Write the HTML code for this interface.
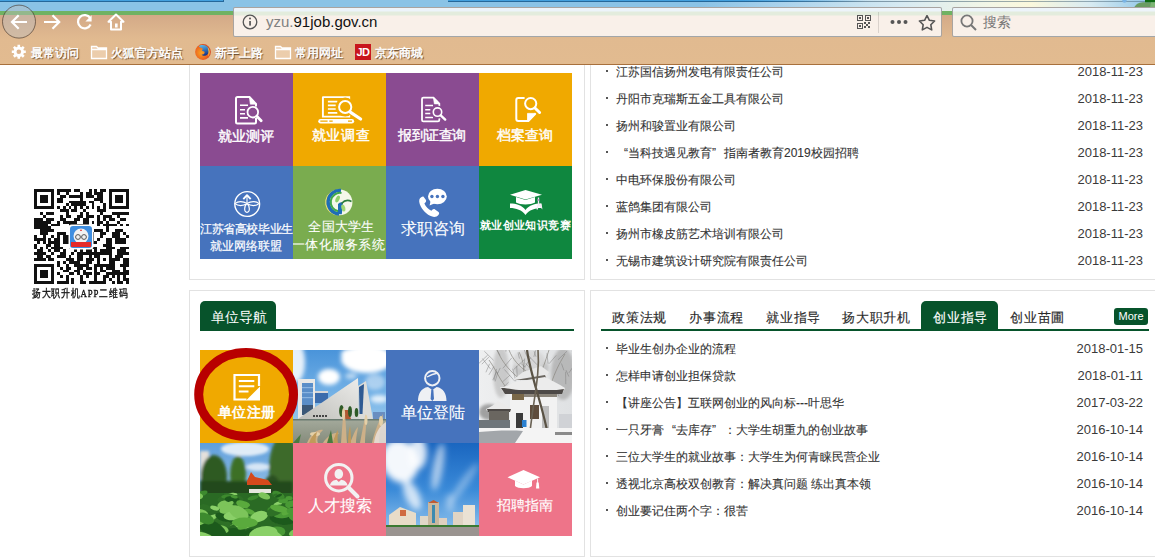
<!DOCTYPE html>
<html><head><meta charset="utf-8">
<style>
*{box-sizing:border-box}
html,body{margin:0;padding:0}
body{width:1155px;height:559px;overflow:hidden;position:relative;background:#fff;font-family:"Liberation Sans",sans-serif;color:#333}
.a{position:absolute}
/* chrome */
#sky{left:0;top:0;width:1155px;height:15px;background:linear-gradient(90deg,#8ac3e6 0,#8ac3e6 700px,#a9d2ec 780px,#d6eaf2 900px,#f3f6e6 990px,#fbf8dc 1030px,#d8ebf2 1090px,#8ac3e6 1155px)}
#green{left:0;top:11px;width:1155px;height:4px;background:#6fb263}
#tan{left:0;top:15px;width:1155px;height:50px;background:linear-gradient(180deg,#d3a987 0,#dab28c 12px,#e1ba90 24px,#e2bb90 100%);border-bottom:1px solid #a8703c}
.bm{font-size:12px;color:#fff;text-shadow:0.5px 1px 1px rgba(40,20,0,.9);top:46px;line-height:14px;white-space:nowrap;font-weight:normal;-webkit-text-stroke:0.45px #fff}
#url{left:233px;top:7px;width:709px;height:30px;border:1px solid rgba(70,70,70,.45);border-radius:2px;background:linear-gradient(180deg,#edf4fa 0,#edf4fa 3px,#e3ecdd 4px,#e3ecdd 7px,#f9f0e9 8px,#f9f0e9 100%)}
#search{left:952px;top:7px;width:220px;height:30px;border:1px solid rgba(70,70,70,.45);border-radius:2px;background:linear-gradient(180deg,#edf4fa 0,#edf4fa 3px,#e3ecdd 4px,#e3ecdd 7px,#f9f0e9 8px,#f9f0e9 100%)}
</style></head>
<body>

<!-- PAGE -->
<div id="page" class="a" style="left:0;top:0;width:1155px;height:559px">
<!-- QR -->
<svg class="a" style="left:34px;top:189px" width="95" height="95" viewBox="0 0 33 33" shape-rendering="crispEdges"><path d="M0 0h7v1h-7zM8 0h5v1h-5zM14 0h2v1h-2zM19 0h1v1h-1zM21 0h1v1h-1zM23 0h2v1h-2zM26 0h7v1h-7zM0 1h1v1h-1zM6 1h1v1h-1zM8 1h1v1h-1zM11 1h1v1h-1zM16 1h1v1h-1zM18 1h2v1h-2zM21 1h3v1h-3zM26 1h1v1h-1zM32 1h1v1h-1zM0 2h1v1h-1zM2 2h3v1h-3zM6 2h1v1h-1zM9 2h2v1h-2zM12 2h5v1h-5zM18 2h3v1h-3zM22 2h2v1h-2zM26 2h1v1h-1zM28 2h3v1h-3zM32 2h1v1h-1zM0 3h1v1h-1zM2 3h3v1h-3zM6 3h1v1h-1zM8 3h2v1h-2zM16 3h1v1h-1zM21 3h3v1h-3zM26 3h1v1h-1zM28 3h3v1h-3zM32 3h1v1h-1zM0 4h1v1h-1zM2 4h3v1h-3zM6 4h1v1h-1zM8 4h2v1h-2zM12 4h6v1h-6zM19 4h2v1h-2zM23 4h1v1h-1zM26 4h1v1h-1zM28 4h3v1h-3zM32 4h1v1h-1zM0 5h1v1h-1zM6 5h1v1h-1zM11 5h1v1h-1zM13 5h5v1h-5zM20 5h1v1h-1zM24 5h1v1h-1zM26 5h1v1h-1zM32 5h1v1h-1zM0 6h7v1h-7zM8 6h1v1h-1zM10 6h1v1h-1zM12 6h1v1h-1zM14 6h1v1h-1zM16 6h1v1h-1zM18 6h1v1h-1zM20 6h1v1h-1zM22 6h1v1h-1zM24 6h1v1h-1zM26 6h7v1h-7zM9 7h3v1h-3zM13 7h2v1h-2zM17 7h1v1h-1zM22 7h3v1h-3zM2 8h1v1h-1zM4 8h3v1h-3zM11 8h1v1h-1zM16 8h1v1h-1zM18 8h1v1h-1zM23 8h1v1h-1zM27 8h6v1h-6zM3 9h1v1h-1zM9 9h1v1h-1zM11 9h2v1h-2zM15 9h2v1h-2zM18 9h3v1h-3zM22 9h1v1h-1zM24 9h3v1h-3zM29 9h1v1h-1zM0 10h3v1h-3zM4 10h3v1h-3zM9 10h2v1h-2zM14 10h2v1h-2zM17 10h2v1h-2zM22 10h1v1h-1zM24 10h1v1h-1zM26 10h2v1h-2zM30 10h2v1h-2zM0 11h6v1h-6zM8 11h1v1h-1zM10 11h5v1h-5zM17 11h2v1h-2zM20 11h1v1h-1zM22 11h2v1h-2zM25 11h1v1h-1zM29 11h1v1h-1zM0 12h5v1h-5zM6 12h3v1h-3zM12 12h7v1h-7zM22 12h1v1h-1zM24 12h5v1h-5zM30 12h1v1h-1zM32 12h1v1h-1zM0 13h6v1h-6zM13 13h2v1h-2zM16 13h1v1h-1zM19 13h1v1h-1zM25 13h1v1h-1zM2 14h5v1h-5zM12 14h2v1h-2zM19 14h1v1h-1zM21 14h3v1h-3zM25 14h1v1h-1zM28 14h3v1h-3zM2 15h3v1h-3zM8 15h3v1h-3zM14 15h1v1h-1zM16 15h3v1h-3zM20 15h1v1h-1zM23 15h2v1h-2zM27 15h3v1h-3zM31 15h1v1h-1zM0 16h1v1h-1zM3 16h1v1h-1zM6 16h1v1h-1zM8 16h1v1h-1zM10 16h9v1h-9zM20 16h1v1h-1zM23 16h1v1h-1zM27 16h3v1h-3zM32 16h1v1h-1zM0 17h4v1h-4zM5 17h1v1h-1zM7 17h2v1h-2zM10 17h2v1h-2zM20 17h1v1h-1zM22 17h1v1h-1zM25 17h2v1h-2zM28 17h4v1h-4zM1 18h1v1h-1zM3 18h1v1h-1zM5 18h4v1h-4zM10 18h2v1h-2zM14 18h8v1h-8zM25 18h2v1h-2zM28 18h4v1h-4zM0 19h1v1h-1zM4 19h2v1h-2zM7 19h2v1h-2zM12 19h2v1h-2zM16 19h1v1h-1zM18 19h2v1h-2zM24 19h3v1h-3zM0 20h1v1h-1zM2 20h1v1h-1zM4 20h1v1h-1zM6 20h4v1h-4zM12 20h2v1h-2zM16 20h2v1h-2zM19 20h3v1h-3zM25 20h3v1h-3zM30 20h3v1h-3zM1 21h2v1h-2zM5 21h1v1h-1zM7 21h2v1h-2zM10 21h1v1h-1zM14 21h1v1h-1zM16 21h1v1h-1zM18 21h2v1h-2zM21 21h1v1h-1zM23 21h4v1h-4zM29 21h3v1h-3zM0 22h4v1h-4zM6 22h1v1h-1zM9 22h2v1h-2zM13 22h1v1h-1zM15 22h12v1h-12zM29 22h4v1h-4zM1 23h2v1h-2zM4 23h2v1h-2zM8 23h3v1h-3zM12 23h1v1h-1zM15 23h2v1h-2zM19 23h1v1h-1zM21 23h2v1h-2zM26 23h1v1h-1zM28 23h3v1h-3zM0 24h4v1h-4zM5 24h2v1h-2zM11 24h3v1h-3zM15 24h2v1h-2zM18 24h3v1h-3zM22 24h1v1h-1zM24 24h1v1h-1zM26 24h4v1h-4zM31 24h2v1h-2zM8 25h1v1h-1zM10 25h1v1h-1zM12 25h4v1h-4zM18 25h2v1h-2zM22 25h1v1h-1zM26 25h2v1h-2zM31 25h2v1h-2zM0 26h7v1h-7zM8 26h1v1h-1zM11 26h1v1h-1zM14 26h5v1h-5zM21 26h7v1h-7zM30 26h3v1h-3zM0 27h1v1h-1zM6 27h1v1h-1zM9 27h1v1h-1zM11 27h2v1h-2zM15 27h2v1h-2zM18 27h2v1h-2zM21 27h1v1h-1zM23 27h1v1h-1zM25 27h3v1h-3zM31 27h1v1h-1zM0 28h1v1h-1zM2 28h3v1h-3zM6 28h1v1h-1zM10 28h2v1h-2zM14 28h2v1h-2zM17 28h1v1h-1zM21 28h1v1h-1zM23 28h2v1h-2zM27 28h3v1h-3zM31 28h2v1h-2zM0 29h1v1h-1zM2 29h3v1h-3zM6 29h1v1h-1zM8 29h1v1h-1zM12 29h2v1h-2zM15 29h1v1h-1zM17 29h3v1h-3zM21 29h2v1h-2zM25 29h8v1h-8zM0 30h1v1h-1zM2 30h3v1h-3zM6 30h1v1h-1zM9 30h1v1h-1zM11 30h1v1h-1zM16 30h1v1h-1zM18 30h1v1h-1zM21 30h1v1h-1zM24 30h2v1h-2zM27 30h1v1h-1zM29 30h1v1h-1zM31 30h1v1h-1zM0 31h1v1h-1zM6 31h1v1h-1zM11 31h1v1h-1zM13 31h1v1h-1zM16 31h1v1h-1zM21 31h1v1h-1zM24 31h1v1h-1zM26 31h1v1h-1zM29 31h1v1h-1zM31 31h2v1h-2zM0 32h7v1h-7zM8 32h4v1h-4zM13 32h1v1h-1zM16 32h2v1h-2zM19 32h6v1h-6zM27 32h1v1h-1zM29 32h2v1h-2zM32 32h1v1h-1z" fill="#111"/></svg>
<svg class="a" style="left:68px;top:224px" width="26" height="26" viewBox="0 0 26 26">
 <rect x="0.5" y="0.5" width="25" height="25" rx="3" fill="#fff"/>
 <rect x="2" y="2" width="22" height="22" rx="3" fill="#3f8ee0"/>
 <circle cx="13" cy="12" r="7.5" fill="#f2f2f2"/>
 <circle cx="10" cy="13" r="2.4" fill="none" stroke="#555" stroke-width="1"/><circle cx="16" cy="13" r="2.4" fill="none" stroke="#555" stroke-width="1"/>
 <rect x="3" y="18" width="20" height="5" fill="#e52a2a"/>
 <path d="M13 5L14 7H12Z" fill="#e52a2a"/>
</svg>
<div class="a" style="left:32px;top:286px;font-family:'Liberation Serif',serif;font-size:11px;line-height:14px;color:#111;white-space:nowrap;font-weight:normal;-webkit-text-stroke:0.35px #111;letter-spacing:1.1px;transform-origin:0 0;transform:scaleX(0.8)">扬大职升机APP二维码</div>

<!-- panel 1 -->
<div class="a" style="left:189px;top:20px;width:396px;height:260px;border:1px solid #e2e2e2"></div>
<!-- panel 2 -->
<div class="a" style="left:590px;top:20px;width:600px;height:260px;border:1px solid #e2e2e2"></div>
<!-- panel 3 -->
<div class="a" style="left:189px;top:290px;width:396px;height:267px;border:1px solid #e2e2e2"></div>
<!-- panel 4 -->
<div class="a" style="left:590px;top:290px;width:600px;height:267px;border:1px solid #e2e2e2"></div>


<style>
.t{position:absolute;width:93px;height:93px;overflow:hidden}
.t svg{position:absolute;left:0;top:0}
.tt{position:absolute;left:-11px;width:113px;text-align:center;color:#fff;white-space:nowrap;font-size:14px;line-height:16px;font-weight:normal;-webkit-text-stroke:0.4px #fff;margin-top:-1px}
</style>
<!-- row1 -->
<div class="t" style="left:200px;top:73px;background:#8a4b91">
 <svg width="93" height="93" viewBox="0 0 93 93" fill="none" stroke="#fff">
  <path d="M56 33.5V31L49.5 24H37.5Q36 24 36 25.5V49Q36 50.5 37.5 50.5H54.5Q56 50.5 56 49V45" stroke-width="2"/>
  <path d="M49.3 23.8L56.2 31.2H50.3Z" fill="#fff" stroke-width="0.6"/>
  <path d="M40 32.3H48M40 36.7H45M40 40.8H45M40 44.9H48" stroke-width="1.6"/>
  <circle cx="52.8" cy="39.2" r="5.3" stroke-width="1.8"/>
  <path d="M56.8 43.2L61.2 47.8" stroke-width="2.8" stroke-linecap="round"/>
 </svg>
 <div class="tt" style="top:56px">就业测评</div>
</div>
<div class="t" style="left:293px;top:73px;background:#f0a900">
 <svg width="93" height="93" viewBox="0 0 93 93" fill="none" stroke="#fff">
  <path d="M56.2 30V24.1H30Q29.9 24.1 29.9 24.5V43.6H56.2V40" stroke-width="1.9"/>
  <path d="M27.6 45.9H58.8A2.35 2.35 0 0 1 58.8 50.6H27.6A2.35 2.35 0 0 1 27.6 45.9Z" fill="#fff" stroke="none"/>
  <path d="M27.3 48.2H34.6M36.3 48.2H39.7M55 48.2H59" stroke="#f0a900" stroke-width="1.2"/>
  <path d="M34.9 28.7H44.4M34.9 32.3H42.7M34.9 36H42.7M34.9 39.8H44.4" stroke-width="1.7"/>
  <circle cx="52.2" cy="34" r="7.2" stroke="#f0a900" stroke-width="4.5"/>
  <circle cx="52.2" cy="34" r="6.1" stroke-width="2"/>
  <path d="M57.6 39.3L67.6 46" stroke-width="3.2" stroke-linecap="round"/>
 </svg>
 <div class="tt" style="top:55px;letter-spacing:0.6px;margin-left:2.5px">就业调查</div>
</div>
<div class="t" style="left:386px;top:73px;background:#8a4b91">
 <svg width="93" height="93" viewBox="0 0 93 93" fill="none" stroke="#fff">
  <path d="M53.3 34V30.5L47.5 24.7H37.4Q36 24.7 36 26.1V47Q36 48.4 37.4 48.4H51.9Q53.3 48.4 53.3 47V44.5" stroke-width="1.8"/>
  <path d="M47.3 24.5L53.5 31H48.3Z" fill="#fff" stroke-width="0.5"/>
  <path d="M39.2 32.6H47M39.2 36.7H44.3M39.2 40.5H44.3M39.2 44.6H47" stroke-width="1.5"/>
  <circle cx="51.5" cy="39.1" r="5.2" stroke="#8a4b91" stroke-width="3"/>
  <circle cx="51.5" cy="39.1" r="4.2" stroke-width="1.6"/>
  <path d="M54.7 42.3L59.2 46.6" stroke-width="2.4" stroke-linecap="round"/>
 </svg>
 <div class="tt" style="top:55px;letter-spacing:-0.5px;margin-left:0.5px">报到证查询</div>
</div>
<div class="t" style="left:479px;top:73px;background:#f0a900">
 <svg width="93" height="93" viewBox="0 0 93 93" fill="none" stroke="#fff">
  <path d="M45.6 25H39.3Q37.3 25 37.3 27V46Q37.3 48 39.3 48H49.4L56.5 40.5" stroke-width="2"/>
  <path d="M48.5 48.8V40.4H56.8Z" fill="#fff" stroke-width="0.8"/>
  <circle cx="51.7" cy="30.6" r="5.6" stroke-width="2"/>
  <path d="M56.2 35.2L60.6 39.5" stroke-width="3" stroke-linecap="round"/>
 </svg>
 <div class="tt" style="top:55px">档案查询</div>
</div>
<!-- row2 -->
<div class="t" style="left:200px;top:166px;background:#4673bd">
 <svg width="93" height="93" viewBox="0 0 93 93" fill="none" stroke="#fff">
  <circle cx="47.2" cy="38" r="12.4" stroke-width="1.4"/>
  <path d="M47 30V37.6" stroke-width="1.1"/>
  <path d="M43.3 33.2L47 29.2L50.7 33.2" stroke-width="1.9" stroke-linejoin="round"/>
  <path d="M47 37.6C43 35 38 35 35 37.6C38 40.2 43 40.2 47 37.6C51 35 56 35 59 37.6C56 40.2 51 40.2 47 37.6ZM47 37.6C44 40 43.8 46.3 47 46.3C50.2 46.3 50 40 47 37.6Z" stroke-width="1.2"/>
 </svg>
 <div class="tt" style="top:57px;font-size:12px;line-height:15px;letter-spacing:-0.4px;font-weight:normal;-webkit-text-stroke:0.2px #fff;margin-left:1px">江苏省高校毕业生</div>
 <div class="tt" style="top:74px;font-size:12px;line-height:15px;font-weight:normal;-webkit-text-stroke:0.2px #fff">就业网络联盟</div>
</div>
<div class="t" style="left:293px;top:166px;background:#7aac4f">
 <svg width="93" height="93" viewBox="0 0 93 93">
  <circle cx="46.6" cy="36.4" r="12.8" fill="#f4f7ea"/>
  <path d="M41 24.8A12.3 12.3 0 0 0 45 48.7" fill="none" stroke="#f0e27a" stroke-width="1.2"/>
  <path d="M48 24.4A11.6 11.6 0 0 0 46 48.1" fill="none" stroke="#1e6db6" stroke-width="3.4"/>
  <path d="M48.5 27A9.2 9.2 0 0 0 45.5 45.3" fill="none" stroke="#40a84c" stroke-width="2"/>
  <path d="M45 38Q47.5 35.2 50 36.8L48.8 48.3H45Z" fill="#1e6db6"/>
  <ellipse cx="44.6" cy="33" rx="1.9" ry="3.6" transform="rotate(25 44.6 33)" fill="#8fd06a"/>
  <ellipse cx="50.3" cy="42" rx="1.9" ry="3.6" transform="rotate(-15 50.3 42)" fill="#9ed872"/>
  <path d="M48.5 37.5Q53 32.5 58.5 35.5" fill="none" stroke="#2d7e3c" stroke-width="1.6"/>
 </svg>
 <div class="tt" style="top:54px;font-size:13px;line-height:16px;font-weight:normal;left:-8px;-webkit-text-stroke:0.1px #fff;letter-spacing:0.3px">全国大学生</div>
 <div class="tt" style="top:72px;font-size:13px;line-height:16px;font-weight:normal;letter-spacing:0.3px;-webkit-text-stroke:0.1px #fff">一体化服务系统</div>
</div>
<div class="t" style="left:386px;top:166px;background:#4673bd">
 <svg width="93" height="93" viewBox="0 0 93 93">
  <path d="M35.2 31.2C33.2 32 32.6 34.8 33.8 38.2C35.8 43.6 40.6 48.6 46.2 50.6C48.6 51.4 51.2 50.6 52.4 49L53 48C53.4 47.2 53 46.4 52.2 45.8L49 43.4C48.2 42.8 47.2 43 46.6 43.6L45.4 44.8C42.4 43.4 39.6 40.4 38.4 37.4L39.6 36.2C40.2 35.6 40.4 34.6 39.8 33.8L37.6 30.8C37 30.2 36 30.8 35.2 31.2Z" fill="#fff"/>
  <ellipse cx="51.4" cy="30.5" rx="9.4" ry="7.7" fill="#fff"/>
  <path d="M44.6 35L43.6 39.6L48.8 37.2Z" fill="#fff"/>
  <g fill="#4673bd"><circle cx="45.9" cy="30.5" r="1.7"/><circle cx="51.4" cy="30.5" r="1.7"/><circle cx="56.9" cy="30.5" r="1.7"/></g>
 </svg>
 <div class="tt" style="top:54px;font-size:16px;line-height:19px;font-weight:normal;margin-left:1px;-webkit-text-stroke:0.1px #fff">求职咨询</div>
</div>
<div class="t" style="left:479px;top:166px;background:#0f873f">
 <svg width="93" height="93" viewBox="0 0 93 93">
  <path d="M31 28.7L46.5 24L63 28.7L46.5 33.5Z" fill="#fff"/>
  <path d="M37 31V36.5C41 39 52 39 56 36.5V31L46.5 34Z" fill="#fff"/>
  <path d="M31 37.5C37 37.5 43 39 46.5 44C50 39 56 37.5 62 37.5V42C56 42 50 44 46.5 49C43 44 37 42 31 42Z" fill="#fff"/>
  <path d="M59.5 31.5V38L58 43.5M59.5 38L62.5 41.5L62 37.5" stroke="#f4eaf6" stroke-width="1.3" fill="none"/>
  <rect x="58.6" y="33" width="1.6" height="2" fill="#c890d0"/>
 </svg>
 <div class="tt" style="top:52px;font-size:11px;line-height:16px;font-weight:bold;letter-spacing:0.4px;-webkit-text-stroke:0;margin-left:1px">就业创业知识竞赛</div>
</div>


<style>
.li{position:absolute;left:604px;width:539px;height:20px;font-size:12px;line-height:20px;color:#333;white-space:nowrap;-webkit-text-stroke:0.1px}
.li .b{position:absolute;left:2px;top:9px;width:2px;height:2px;background:#555;font-size:0}
.li .x{position:absolute;left:12px;top:1px}
.ql{display:inline-block;width:12px;text-align:right}.qr{display:inline-block;width:12px;text-align:left}
.li .d{position:absolute;right:0;top:1px;font-size:13px;-webkit-text-stroke:0;color:#3a3a3a}
</style>
<div class="li" style="top:61px"><span class="b"></span><span class="x">江苏国信扬州发电有限责任公司</span><span class="d">2018-11-23</span></div>
<div class="li" style="top:88px"><span class="b"></span><span class="x">丹阳市克瑞斯五金工具有限公司</span><span class="d">2018-11-23</span></div>
<div class="li" style="top:115px"><span class="b"></span><span class="x">扬州和骏置业有限公司</span><span class="d">2018-11-23</span></div>
<div class="li" style="top:142px"><span class="b"></span><span class="x"><span class="ql">“</span>当科技遇见教育<span class="qr">”</span>指南者教育2019校园招聘</span><span class="d">2018-11-23</span></div>
<div class="li" style="top:169px"><span class="b"></span><span class="x">中电环保股份有限公司</span><span class="d">2018-11-23</span></div>
<div class="li" style="top:196px"><span class="b"></span><span class="x">蓝鸽集团有限公司</span><span class="d">2018-11-23</span></div>
<div class="li" style="top:223px"><span class="b"></span><span class="x">扬州市橡皮筋艺术培训有限公司</span><span class="d">2018-11-23</span></div>
<div class="li" style="top:250px"><span class="b"></span><span class="x">无锡市建筑设计研究院有限责任公司</span><span class="d">2018-11-23</span></div>


<!-- panel 3 tab -->
<div class="a" style="left:200px;top:329px;width:374px;height:2px;background:#07532b"></div>
<div class="a" style="left:200px;top:301px;width:76px;height:30px;background:#07532b;border-radius:5px 5px 0 0;color:#fff;font-size:14px;line-height:18px;padding:7px 0 0 11px;white-space:nowrap">单位导航</div>

<div class="t" style="left:200px;top:350px;background:#f0a900">
 <svg width="93" height="93" viewBox="0 0 93 93" fill="none" stroke="#fff">
  <path d="M59 36V25H34.5V49.5H46.5" stroke-width="2.2"/>
  <path d="M46 50.5L60 36.5V50.5Z" fill="#fff" stroke="none"/>
  <path d="M38.8 31H54.3M38.8 36.2H54.3M38.8 41.5H48.5" stroke-width="2"/>
 </svg>
 <div class="tt" style="top:55px;font-weight:normal;-webkit-text-stroke:0.6px #fff;letter-spacing:0.5px;margin-left:1px">单位注册</div>
</div>
<div class="t" style="left:293px;top:350px">
 <svg width="93" height="93" viewBox="0 0 93 93">
  <defs>
   <linearGradient id="sk1" x1="0" y1="0" x2="0" y2="1"><stop offset="0" stop-color="#4a94da"/><stop offset="0.55" stop-color="#7ab6e8"/><stop offset="1" stop-color="#b8d8f0"/></linearGradient>
   <linearGradient id="tri1" x1="1" y1="0" x2="0" y2="1"><stop offset="0" stop-color="#ececea"/><stop offset="1" stop-color="#bdbdb8"/></linearGradient>
   <linearGradient id="wat1" x1="0" y1="0" x2="0" y2="1"><stop offset="0" stop-color="#a4aa9c"/><stop offset="1" stop-color="#868c7c"/></linearGradient>
   <filter id="bl1"><feGaussianBlur stdDeviation="2.2"/></filter>
   <filter id="bl05"><feGaussianBlur stdDeviation="0.5"/></filter>
  </defs>
  <rect width="93" height="93" fill="url(#sk1)"/>
  <g filter="url(#bl1)" fill="#fff">
   <ellipse cx="74" cy="9" rx="26" ry="14"/><ellipse cx="60" cy="4" rx="12" ry="6"/><ellipse cx="36" cy="27" rx="11" ry="8"/><ellipse cx="3" cy="12" rx="9" ry="20" opacity=".85"/>
   <ellipse cx="86" cy="49" rx="9" ry="4" opacity=".8"/><ellipse cx="82" cy="32" rx="10" ry="8" opacity=".45"/><ellipse cx="58" cy="26" rx="6" ry="3" opacity=".6"/>
  </g>
  <g filter="url(#bl05)">
  <rect x="5" y="29" width="17" height="41" fill="#e8e8e6"/>
  <rect x="9" y="33" width="11" height="22" fill="#5a8ec8"/>
  <g fill="#8ab4e0"><rect x="9" y="37" width="11" height="1.2"/><rect x="9" y="42" width="11" height="1.2"/><rect x="9" y="47" width="11" height="1.2"/></g>
  <rect x="9" y="55" width="11" height="10" fill="#3a5878"/>
  <rect x="22" y="41" width="13" height="2" fill="#d8d8d8"/>
  <rect x="22" y="43" width="13" height="10" fill="#3a6cac"/>
  <path d="M4 69.5L65 28L66 69.5Z" fill="url(#tri1)"/>
  <path d="M65 36L73 31L80 69.5H66Z" fill="#dcdcd8"/>
  <path d="M66 37L71 34L69.5 64H66.5Z" fill="#2e5a92"/>
  <rect x="80" y="62" width="12" height="7" fill="#6a8ec0"/>
  <g fill="#444"><rect x="20" y="65" width="2" height="2"/><rect x="23" y="65" width="2" height="2"/><rect x="26" y="65" width="2" height="2"/><rect x="29" y="65" width="2" height="2"/><rect x="32" y="65" width="2" height="2"/></g>
  <rect x="0" y="69" width="93" height="24" fill="url(#wat1)"/>
  <rect x="0" y="69" width="93" height="1.5" fill="#6a7a70"/>
  <path d="M50 60L55 60L58 69H51Z" fill="#b05a30"/>
  <g fill="#2e5a28"><ellipse cx="48.5" cy="61" rx="2.4" ry="6"/><ellipse cx="57" cy="61.5" rx="2" ry="5.5"/><ellipse cx="63.5" cy="62.5" rx="1.8" ry="4.5"/></g>
  </g>
  <g filter="url(#bl05)">
   <g fill="#cdb088">
    <path d="M14 93C18 84 24 79 30 80C26 84 23 88 25 93Z"/><path d="M30 93C34 87 40 82 46 83C42 86 40 90 41 93Z"/>
    <path d="M48 93C49 80 50 68 50.5 57C53 66 53 82 54 93Z"/><path d="M67 93C69 82 71 72 73 64C74 74 72 84 72 93Z"/>
    <path d="M79 93C81 84 85 72 90 64C88 76 86 84 86 93Z"/><path d="M57 93C60 86 62 80 65 77C64 84 63 88 63 93Z"/>
   </g>
   <g fill="#e4d0a8"><ellipse cx="50.5" cy="64" rx="1.6" ry="6"/><ellipse cx="73" cy="70" rx="1.5" ry="5"/><ellipse cx="88" cy="71" rx="2" ry="5"/><ellipse cx="22" cy="84" rx="5" ry="2"/></g>
   <g fill="#4a7a40"><path d="M0 93L8 84L6 93Z"/><path d="M34 93L38 80L40 93Z"/></g>
   <path d="M81 93C82 84 86 76 93 72V93Z" fill="#e8e0dc" opacity=".85"/>
   <g fill="#c09a5a"><path d="M16 93C18 88 20 84 24 82C23 86 22 90 23 93Z"/><path d="M40 93C41 88 43 83 45 80C45 85 44 89 45 93Z"/><path d="M55 93C55 86 56 80 57 76C58 82 58 88 58 93Z"/></g>
  </g>
 </svg>
</div>
<div class="t" style="left:386px;top:350px;background:#4673bd">
 <svg width="93" height="93" viewBox="0 0 93 93" fill="none">
  <circle cx="46.3" cy="28.2" r="7.2" stroke="#eef0f4" stroke-width="2"/>
  <path d="M41 27Q46 24 52 23" stroke="#eef0f4" stroke-width="1.4"/>
  <path d="M32 51C32 44 35 38 42 37L46.3 40L50.6 37C57.5 38 60.5 44 60.5 51Z" fill="#eef0f4"/>
  <path d="M45.3 39.5H47.3L48 49L46.3 51L44.6 49Z" fill="#4673bd"/>
 </svg>
 <div class="tt" style="top:54px;font-size:16px;line-height:19px;font-weight:normal;margin-left:1px;-webkit-text-stroke:0.1px #fff">单位登陆</div>
</div>
<div class="t" style="left:479px;top:350px">
 <svg width="93" height="93" viewBox="0 0 93 93">
  <defs><filter id="bl2"><feGaussianBlur stdDeviation="0.6"/></filter><filter id="bl3"><feGaussianBlur stdDeviation="1.8"/></filter>
  <linearGradient id="sn1" x1="0" y1="0" x2="1" y2="0"><stop offset="0" stop-color="#eeeff0"/><stop offset="1" stop-color="#dfe1e3"/></linearGradient></defs>
  <rect width="93" height="93" fill="url(#sn1)"/>
  <g filter="url(#bl3)" opacity=".7">
   <ellipse cx="22" cy="22" rx="8" ry="26" fill="#bcbcbc"/><ellipse cx="84" cy="24" rx="12" ry="26" fill="#a8a8a8"/><ellipse cx="10" cy="62" rx="10" ry="8" fill="#808080"/><ellipse cx="52" cy="18" rx="18" ry="12" fill="#b8b8b8"/>
   <ellipse cx="50" cy="10" rx="16" ry="10" fill="#d0d0d0"/>
  </g>
  <g filter="url(#bl2)">
  <g stroke="#8a8680" stroke-width="0.7" fill="none">
   <path d="M18 0C24 14 32 22 42 30M30 0C34 10 40 16 48 22M70 0C66 12 64 20 58 28M86 4C80 14 76 22 72 34M40 2C44 10 46 18 44 28M10 10C16 18 20 28 26 36"/>
  </g>
  <path d="M44.8 19.6L45.7 8.5M21.3 17.9L18.1 24.1M17.5 18.9L15.0 30.6M89.9 22.9L93.4 17.8M10.2 6.7L2.8 14.2M57.0 6.8L55.1 1.1M45.2 9.7L34.7 19.5M32.7 8.0L23.8 18.4M14.5 10.2L5.3 1.2M23.5 31.9L30.9 25.2M54.8 6.9L57.5 -1.8M89.8 26.5L87.0 20.1M45.9 17.0L51.7 7.6M41.9 13.4L46.4 17.4M92.8 0.7L102.0 -7.1M8.7 5.1L-0.1 13.4M39.0 2.6L40.5 8.6M37.7 15.9L38.3 27.6M21.1 5.4L16.9 -2.0M18.9 22.0L16.1 31.5M58.1 14.8L47.3 3.5M70.1 13.7L77.2 5.4M86.8 34.2L86.6 21.7M29.7 32.1L23.4 38.2M26.9 1.6L28.1 -14.1M36.9 31.2L33.7 18.7M56.9 32.3L54.9 23.4M6.9 22.3L10.6 13.8M11.6 19.1L3.4 8.5M74.8 32.0L79.7 46.2M88.1 1.1L79.0 9.8M56.3 21.3L60.3 36.7M69.1 13.6L67.9 3.3M50.6 18.0L46.7 13.2M48.8 21.5L51.3 27.0M17.6 21.4L13.8 30.1M48.9 8.5L44.0 -2.9M82.5 13.5L84.9 20.4M35.9 31.3L25.4 19.5M14.9 16.5L9.9 24.9" stroke="#777" stroke-width="0.6" fill="none" opacity=".75"/>
  <path d="M34 30L44 22L62 16L70 22L66 30Z" fill="#e8e8e8"/>
  <path d="M36 30L66 25L68 30H40Z" fill="#6a6660"/>
  <rect x="31" y="37" width="47" height="43" fill="#f2f2f2"/>
  <path d="M21 37C26 38 30 35 36 32L66 27C72 30 80 34 86 38L84 42H24Z" fill="#ececec"/>
  <path d="M22 38C30 38 34 40 40 40H70C76 40 80 40 85 39L83 44H26Z" fill="#4e4a46"/>
  <rect x="33" y="44" width="45" height="3" fill="#8a847a"/>
  <rect x="33" y="44" width="12" height="6" fill="#7a6848"/>
  <rect x="51" y="55" width="9" height="14" fill="#5e4e3c"/>
  <rect x="37" y="63" width="7" height="16" fill="#3a3a3a"/>
  <rect x="43" y="70" width="4.5" height="7" fill="#2a80d0"/>
  <rect x="63" y="56" width="7" height="24" fill="#bdbdbd"/>
  <path d="M7 59C12 57 16 54 19 51L29 56L32 61H8Z" fill="#eaeaea"/>
  <path d="M8 59H32L31 62H9Z" fill="#4e4a46"/>
  <rect x="10" y="61" width="20" height="11" fill="#6a6660"/>
  <rect x="0" y="70" width="31" height="8" fill="#6e747a"/>
  <rect x="80" y="64" width="13" height="17" fill="#d0d2d6"/>
  <path d="M48 0C52 28 64 56 70 90" stroke="#5a5244" stroke-width="2.2" fill="none"/>
  <path d="M59 0C61 24 55 46 51 82" stroke="#6a6254" stroke-width="1.6" fill="none"/>
  <rect x="0" y="78" width="93" height="15" fill="#f4f4f4"/>
  <path d="M0 82C12 81 30 80 44 81L36 93H0Z" fill="#a2a6aa"/>
  <rect x="76" y="82" width="17" height="3" fill="#8a8a8a"/>
  </g>
 </svg>
</div>
<div class="t" style="left:200px;top:443px">
 <svg width="93" height="93" viewBox="0 0 93 93">
  <defs><linearGradient id="sk3" x1="0" y1="0" x2="0" y2="1"><stop offset="0" stop-color="#5f9fdc"/><stop offset="1" stop-color="#c4dcf0"/></linearGradient>
  <filter id="bl4"><feGaussianBlur stdDeviation="1.4"/></filter><filter id="bl5"><feGaussianBlur stdDeviation="0.5"/></filter></defs>
  <rect width="93" height="93" fill="url(#sk3)"/>
  <g filter="url(#bl4)">
   <ellipse cx="45" cy="6" rx="24" ry="7" fill="#f4f8fc" opacity=".85"/><ellipse cx="58" cy="24" rx="12" ry="4" fill="#eef4fa" opacity=".8"/>
   <rect x="0" y="8" width="9" height="28" fill="#e4e0dc"/>
   <ellipse cx="14" cy="34" rx="13" ry="22" fill="#2e5a22"/>
   <ellipse cx="38" cy="32" rx="8" ry="19" fill="#3e7028"/>
   <ellipse cx="84" cy="26" rx="15" ry="34" fill="#3e6a2a"/>
   <ellipse cx="72" cy="44" rx="8" ry="12" fill="#2a5020"/>
   <rect x="0" y="38" width="93" height="16" fill="#244a1c"/>
  </g>
  <g filter="url(#bl5)">
   <path d="M47 38L51 29L55 34L68 37L72 42H47Z" fill="#d44a1c"/>
   <rect x="49" y="46" width="22" height="4" fill="#e6e6de"/>
  </g>
  <rect x="0" y="50" width="93" height="43" fill="#2a6a24"/>
  <g filter="url(#bl5)"><ellipse cx="19.5" cy="75.0" rx="7.6" ry="3.8" fill="#8ad068" transform="rotate(7 19.5 75.0)"/><ellipse cx="1.7" cy="50.6" rx="6.1" ry="2.5" fill="#3d8a2e" transform="rotate(-18 1.7 50.6)"/><ellipse cx="97.6" cy="71.6" rx="10.7" ry="5.0" fill="#8ad068" transform="rotate(25 97.6 71.6)"/><ellipse cx="10.5" cy="79.2" rx="12.6" ry="6.1" fill="#8ad068" transform="rotate(-30 10.5 79.2)"/><ellipse cx="64.2" cy="52.9" rx="6.2" ry="3.1" fill="#7cc45a" transform="rotate(19 64.2 52.9)"/><ellipse cx="-1.8" cy="89.8" rx="10.9" ry="5.7" fill="#2e7026" transform="rotate(15 -1.8 89.8)"/><ellipse cx="76.2" cy="69.6" rx="9.4" ry="4.7" fill="#3d8a2e" transform="rotate(26 76.2 69.6)"/><ellipse cx="32.6" cy="51.7" rx="4.8" ry="2.0" fill="#8ad068" transform="rotate(-3 32.6 51.7)"/><ellipse cx="75.2" cy="89.3" rx="10.2" ry="5.7" fill="#4a9a36" transform="rotate(-8 75.2 89.3)"/><ellipse cx="50.0" cy="68.7" rx="5.7" ry="2.5" fill="#5aaa3c" transform="rotate(24 50.0 68.7)"/><ellipse cx="23.8" cy="77.9" rx="10.8" ry="5.7" fill="#7cc45a" transform="rotate(4 23.8 77.9)"/><ellipse cx="88.2" cy="76.2" rx="10.6" ry="4.3" fill="#1f5a1e" transform="rotate(6 88.2 76.2)"/><ellipse cx="22.5" cy="55.7" rx="5.4" ry="2.7" fill="#2e7026" transform="rotate(-25 22.5 55.7)"/><ellipse cx="30.4" cy="53.1" rx="6.9" ry="2.4" fill="#2e7026" transform="rotate(19 30.4 53.1)"/><ellipse cx="37.8" cy="55.5" rx="5.9" ry="3.2" fill="#2e7026" transform="rotate(15 37.8 55.5)"/><ellipse cx="55.4" cy="75.3" rx="12.2" ry="5.1" fill="#3d8a2e" transform="rotate(-28 55.4 75.3)"/><ellipse cx="26.9" cy="53.5" rx="5.6" ry="2.0" fill="#3d8a2e" transform="rotate(-4 26.9 53.5)"/><ellipse cx="25.0" cy="62.1" rx="7.7" ry="4.6" fill="#7cc45a" transform="rotate(-10 25.0 62.1)"/><ellipse cx="32.1" cy="56.4" rx="7.4" ry="3.3" fill="#1f5a1e" transform="rotate(3 32.1 56.4)"/><ellipse cx="34.8" cy="89.9" rx="13.0" ry="4.9" fill="#1f5a1e" transform="rotate(2 34.8 89.9)"/><ellipse cx="22.9" cy="79.2" rx="11.2" ry="6.6" fill="#2e7026" transform="rotate(-14 22.9 79.2)"/><ellipse cx="48.7" cy="75.2" rx="4.7" ry="2.1" fill="#4a9a36" transform="rotate(-10 48.7 75.2)"/><ellipse cx="-2.9" cy="78.3" rx="10.4" ry="3.8" fill="#8ad068" transform="rotate(-9 -2.9 78.3)"/><ellipse cx="43.0" cy="81.2" rx="8.4" ry="4.4" fill="#8ad068" transform="rotate(1 43.0 81.2)"/><ellipse cx="-2.7" cy="52.8" rx="5.8" ry="3.4" fill="#7cc45a" transform="rotate(10 -2.7 52.8)"/><ellipse cx="42.0" cy="77.3" rx="7.5" ry="3.3" fill="#7cc45a" transform="rotate(18 42.0 77.3)"/><ellipse cx="33.0" cy="77.4" rx="7.4" ry="3.3" fill="#1f5a1e" transform="rotate(22 33.0 77.4)"/><ellipse cx="-2.2" cy="76.2" rx="10.8" ry="4.6" fill="#3d8a2e" transform="rotate(11 -2.2 76.2)"/><ellipse cx="77.8" cy="61.0" rx="4.5" ry="2.1" fill="#8ad068" transform="rotate(-24 77.8 61.0)"/><ellipse cx="5.5" cy="64.8" rx="5.9" ry="3.3" fill="#2e7026" transform="rotate(21 5.5 64.8)"/><ellipse cx="83.1" cy="57.8" rx="4.9" ry="2.5" fill="#4a9a36" transform="rotate(-2 83.1 57.8)"/><ellipse cx="22.9" cy="86.2" rx="6.0" ry="3.5" fill="#7cc45a" transform="rotate(21 22.9 86.2)"/><ellipse cx="81.1" cy="76.4" rx="11.9" ry="5.2" fill="#1f5a1e" transform="rotate(11 81.1 76.4)"/><ellipse cx="3.8" cy="78.5" rx="10.0" ry="4.6" fill="#4a9a36" transform="rotate(20 3.8 78.5)"/><ellipse cx="82.5" cy="71.4" rx="9.1" ry="3.8" fill="#4a9a36" transform="rotate(-4 82.5 71.4)"/><ellipse cx="-1.3" cy="69.0" rx="5.5" ry="2.6" fill="#1f5a1e" transform="rotate(26 -1.3 69.0)"/><ellipse cx="59.1" cy="73.5" rx="8.9" ry="5.3" fill="#8ad068" transform="rotate(-16 59.1 73.5)"/><ellipse cx="-1.7" cy="71.0" rx="9.9" ry="5.3" fill="#7cc45a" transform="rotate(4 -1.7 71.0)"/><ellipse cx="30.1" cy="60.5" rx="3.7" ry="1.9" fill="#7cc45a" transform="rotate(-23 30.1 60.5)"/><ellipse cx="78.4" cy="52.1" rx="6.7" ry="3.5" fill="#3d8a2e" transform="rotate(27 78.4 52.1)"/><ellipse cx="86.0" cy="69.8" rx="4.5" ry="2.1" fill="#5aaa3c" transform="rotate(-20 86.0 69.8)"/><ellipse cx="46.8" cy="61.0" rx="3.5" ry="1.7" fill="#5aaa3c" transform="rotate(30 46.8 61.0)"/><ellipse cx="89.0" cy="55.2" rx="3.5" ry="2.1" fill="#4a9a36" transform="rotate(0 89.0 55.2)"/><ellipse cx="78.6" cy="52.8" rx="3.7" ry="1.4" fill="#1f5a1e" transform="rotate(-23 78.6 52.8)"/><ellipse cx="12.6" cy="86.4" rx="14.7" ry="8.1" fill="#1f5a1e" transform="rotate(28 12.6 86.4)"/><ellipse cx="-4.2" cy="78.9" rx="12.5" ry="4.5" fill="#7cc45a" transform="rotate(-15 -4.2 78.9)"/><ellipse cx="22.7" cy="74.3" rx="7.9" ry="3.7" fill="#1f5a1e" transform="rotate(22 22.7 74.3)"/><ellipse cx="-4.8" cy="52.5" rx="3.2" ry="1.2" fill="#5aaa3c" transform="rotate(0 -4.8 52.5)"/><ellipse cx="95.4" cy="89.3" rx="6.8" ry="3.2" fill="#7cc45a" transform="rotate(-20 95.4 89.3)"/><ellipse cx="27.4" cy="66.2" rx="8.2" ry="4.1" fill="#7cc45a" transform="rotate(-14 27.4 66.2)"/><ellipse cx="14.7" cy="65.1" rx="4.6" ry="2.2" fill="#8ad068" transform="rotate(16 14.7 65.1)"/><ellipse cx="34.2" cy="53.7" rx="3.6" ry="1.6" fill="#4a9a36" transform="rotate(11 34.2 53.7)"/><ellipse cx="75.6" cy="67.5" rx="9.5" ry="4.8" fill="#2e7026" transform="rotate(-27 75.6 67.5)"/><ellipse cx="33.4" cy="72.8" rx="9.9" ry="4.5" fill="#8ad068" transform="rotate(-4 33.4 72.8)"/><ellipse cx="42.5" cy="61.3" rx="6.6" ry="3.5" fill="#5aaa3c" transform="rotate(21 42.5 61.3)"/><ellipse cx="38.8" cy="69.6" rx="10.5" ry="6.1" fill="#7cc45a" transform="rotate(27 38.8 69.6)"/><ellipse cx="52.6" cy="90.0" rx="7.2" ry="3.8" fill="#1f5a1e" transform="rotate(16 52.6 90.0)"/><ellipse cx="63.2" cy="90.8" rx="14.4" ry="7.4" fill="#8ad068" transform="rotate(-10 63.2 90.8)"/><ellipse cx="53.1" cy="54.7" rx="5.7" ry="2.0" fill="#3d8a2e" transform="rotate(-15 53.1 54.7)"/><ellipse cx="74.8" cy="52.0" rx="3.0" ry="1.1" fill="#2e7026" transform="rotate(-19 74.8 52.0)"/><ellipse cx="79.4" cy="65.7" rx="9.5" ry="3.4" fill="#5aaa3c" transform="rotate(13 79.4 65.7)"/><ellipse cx="44.6" cy="82.0" rx="7.9" ry="3.3" fill="#5aaa3c" transform="rotate(-28 44.6 82.0)"/><ellipse cx="97.6" cy="75.9" rx="9.1" ry="3.7" fill="#4a9a36" transform="rotate(17 97.6 75.9)"/><ellipse cx="5.3" cy="75.5" rx="9.2" ry="5.2" fill="#3d8a2e" transform="rotate(22 5.3 75.5)"/><ellipse cx="3.0" cy="95.9" rx="13.8" ry="6.4" fill="#8ad068" transform="rotate(18 3.0 95.9)"/><ellipse cx="92.1" cy="61.6" rx="7.0" ry="4.1" fill="#4a9a36" transform="rotate(-4 92.1 61.6)"/><ellipse cx="94.5" cy="67.3" rx="5.6" ry="3.2" fill="#1f5a1e" transform="rotate(17 94.5 67.3)"/><ellipse cx="94.6" cy="69.1" rx="8.2" ry="4.0" fill="#4a9a36" transform="rotate(13 94.6 69.1)"/><ellipse cx="44.8" cy="79.6" rx="12.9" ry="5.0" fill="#5aaa3c" transform="rotate(1 44.8 79.6)"/><ellipse cx="72.1" cy="92.2" rx="11.7" ry="5.4" fill="#8ad068" transform="rotate(24 72.1 92.2)"/></g>
 </svg>
</div>
<div class="t" style="left:293px;top:443px;background:#ee7489">
 <svg width="93" height="93" viewBox="0 0 93 93" fill="none">
  <circle cx="45.8" cy="34.7" r="13.2" stroke="#f2f2f2" stroke-width="3"/>
  <path d="M55.5 44.5L64.5 53.5" stroke="#f2f2f2" stroke-width="4" stroke-linecap="round"/>
  <ellipse cx="45.8" cy="31" rx="4.3" ry="5" fill="#f2f2f2"/>
  <path d="M37 42.5C37.5 38.5 41 37 43.5 36.8L45.8 39L48.1 36.8C50.6 37 54 38.5 54.5 42.5Z" fill="#f2f2f2"/>
 </svg>
 <div class="tt" style="top:54px;font-size:16px;line-height:19px;font-weight:normal;margin-left:1px;-webkit-text-stroke:0.1px #fff">人才搜索</div>
</div>
<div class="t" style="left:386px;top:443px">
 <svg width="93" height="93" viewBox="0 0 93 93">
  <defs><linearGradient id="sk4" x1="0" y1="0" x2="0" y2="1"><stop offset="0" stop-color="#1a66c0"/><stop offset="0.5" stop-color="#3a8ad8"/><stop offset="1" stop-color="#9ccaf0"/></linearGradient>
  <filter id="bl6"><feGaussianBlur stdDeviation="3"/></filter><filter id="bl7"><feGaussianBlur stdDeviation="0.6"/></filter></defs>
  <rect width="93" height="93" fill="url(#sk4)"/>
  <g filter="url(#bl6)" fill="#fff">
   <ellipse cx="14" cy="18" rx="18" ry="22" opacity=".95" transform="rotate(-20 14 18)"/><ellipse cx="32" cy="10" rx="9" ry="16" opacity=".85"/>
   <ellipse cx="26" cy="52" rx="7" ry="16" opacity=".75" transform="rotate(-25 26 52)"/><ellipse cx="52" cy="24" rx="5" ry="24" opacity=".6" transform="rotate(10 52 24)"/>
   <ellipse cx="78" cy="40" rx="4" ry="24" opacity=".35" transform="rotate(35 78 40)"/><ellipse cx="64" cy="60" rx="4" ry="9" opacity=".4"/>
  </g>
  <g filter="url(#bl7)">
   <path d="M3 72L14 64L30 70V83H3Z" fill="#e8dcc8"/>
   <rect x="14" y="67" width="6" height="6" fill="#d06a40"/>
   <rect x="42" y="59" width="11" height="24" fill="#c8b8a0"/><rect x="46" y="62" width="3" height="18" fill="#3a8ab0"/>
   <path d="M42 60L47.5 57L53 60Z" fill="#c05a30"/>
   <rect x="34" y="73" width="8" height="10" fill="#e0d8c8"/><rect x="53" y="75" width="8" height="8" fill="#e0d0c0"/>
   <rect x="67" y="69" width="10" height="14" fill="#e0d4c4"/><rect x="77" y="62" width="12" height="21" fill="#eae2d4"/>
   <rect x="0" y="82" width="93" height="3" fill="#3a7a30"/>
   <rect x="0" y="84" width="93" height="9" fill="#9a9490"/>
  </g>
 </svg>
</div>
<div class="t" style="left:479px;top:443px;background:#ee7489">
 <svg width="93" height="93" viewBox="0 0 93 93">
  <path d="M28.5 34.3L44.5 27L61 34.3L44.5 41.5Z" fill="#fff"/>
  <path d="M36 37.5V43C39 46 50 46 53 43V37.5L44.5 41.5Z" fill="#fff"/>
  <path d="M58.6 35.5V40" stroke="#fff" stroke-width="0.9"/>
  <path d="M57.5 39.5H59.7L60.3 45.5H57Z" fill="#fff"/>
 </svg>
 <div class="tt" style="top:55px;-webkit-text-stroke:0.15px #fff">招聘指南</div>
</div>
<!-- red circle -->
<svg class="a" style="left:186px;top:340px" width="120" height="110" viewBox="0 0 120 110">
 <ellipse cx="60.1" cy="54.5" rx="47.4" ry="41.9" fill="none" stroke="#b80000" stroke-width="9"/>
</svg>


<!-- tabs panel 4 -->
<div class="a" style="left:601px;top:329px;width:548px;height:2px;background:#07532b"></div>
<div class="a" style="left:921px;top:301px;width:77px;height:30px;background:#07532b;border-radius:5px 5px 0 0"></div>
<div class="a tab" style="left:612px">政策法规</div>
<div class="a tab" style="left:689px">办事流程</div>
<div class="a tab" style="left:766px">就业指导</div>
<div class="a tab" style="left:842px">扬大职升机</div>
<div class="a tab" style="left:933px;color:#fff">创业指导</div>
<div class="a tab" style="left:1010px">创业苗圃</div>
<div class="a" style="left:1114px;top:308px;width:34px;height:17px;background:#07532b;border-radius:3px;color:#fff;font-size:11px;line-height:17px;text-align:center">More</div>
<style>.tab{top:309px;font-size:13px;letter-spacing:0.8px;line-height:18px;color:#2a2a2a;white-space:nowrap;-webkit-text-stroke:0.15px}</style>
<div class="li" style="top:338px"><span class="b"></span><span class="x">毕业生创办企业的流程</span><span class="d">2018-01-15</span></div>
<div class="li" style="top:365px"><span class="b"></span><span class="x">怎样申请创业担保贷款</span><span class="d">2018-01-11</span></div>
<div class="li" style="top:392px"><span class="b"></span><span class="x">【讲座公告】互联网创业的风向标---叶思华</span><span class="d">2017-03-22</span></div>
<div class="li" style="top:419px"><span class="b"></span><span class="x">一只牙膏<span class="ql">“</span>去库存<span class="qr">”</span>：大学生胡重九的创业故事</span><span class="d">2016-10-14</span></div>
<div class="li" style="top:446px"><span class="b"></span><span class="x">三位大学生的就业故事：大学生为何青睐民营企业</span><span class="d">2016-10-14</span></div>
<div class="li" style="top:473px"><span class="b"></span><span class="x">透视北京高校双创教育：解决真问题 练出真本领</span><span class="d">2016-10-14</span></div>
<div class="li" style="top:500px"><span class="b"></span><span class="x">创业要记住两个字：很苦</span><span class="d">2016-10-14</span></div>

</div>
<div id="chrome">
<div id="sky" class="a"></div>
<div class="a" style="left:0;top:0;width:224px;height:2px;background:#43a0de;border-bottom:1px solid #25689a;border-right:1px solid #25689a"></div>
<div class="a" style="left:448px;top:0;width:420px;height:2px;background:linear-gradient(90deg,#43a0de,#43a0de 70%,rgba(67,160,222,0))"></div>
<div class="a" style="left:448px;top:1px;width:697px;height:1px;background:linear-gradient(90deg,#25689a,#25689a 45%,rgba(60,90,110,.55) 60%,rgba(60,90,110,.45) 100%)"></div>
<svg class="a" style="left:1100px;top:0" width="55" height="15" viewBox="0 0 55 15"><path d="M34 7.5C36 4.5 38 2.5 43 2.3H55V7.5Z" fill="#6a9c62"/><path d="M45 0H55V2.3H45Z" fill="#0c6a10"/><path d="M51 2.3L55 2.3V7.5H50Z" fill="#8ac880" opacity=".6"/><circle cx="24.5" cy="0.5" r="2.2" fill="#7ab4e4"/></svg>
<div id="green" class="a"></div>
<div id="tan" class="a"></div>

<!-- back circle -->
<svg class="a" style="left:0;top:0" width="140" height="42" viewBox="0 0 140 42">
  <circle cx="19" cy="21.6" r="16.5" fill="rgba(190,190,190,.45)" stroke="rgba(60,45,35,.6)" stroke-width="1"/>
  <g stroke="#fff" stroke-width="2.2" fill="none" stroke-linecap="butt">
    <path d="M11.5 22H27M18.7 15.3L12 22L18.7 28.7"/>
    <path d="M44 22H59.5M52.5 15.3L59.2 22L52.5 28.7"/>
    <path d="M90.2 18.2A6.6 6.6 0 1 0 90.6 24.5"/>
  </g>
  <path d="M91.6 15.2V21.6H85.4Z" fill="#fff"/>
  <path d="M116 14.5L108.5 21.8H111V29.5H121V21.8H123.5Z" fill="none" stroke="#fff" stroke-width="2" stroke-linejoin="round"/>
  <rect x="115" y="23.5" width="2.6" height="4" fill="#fff"/>
</svg>

<div id="url" class="a"></div>
<svg class="a" style="left:240px;top:13px" width="20" height="20" viewBox="0 0 20 20">
  <circle cx="10" cy="9" r="6.8" fill="none" stroke="#555" stroke-width="1.3"/>
  <rect x="9.2" y="8" width="1.7" height="4.6" fill="#555"/><circle cx="10" cy="5.6" r="1" fill="#555"/>
</svg>
<div class="a" style="left:266px;top:13px;font-size:15px;line-height:18px;color:#111;white-space:nowrap"><span style="color:#808080">yzu.</span>91job.gov.cn</div>
<!-- qr icon -->
<svg class="a" style="left:857px;top:15px" width="14" height="14" viewBox="0 0 14 14" shape-rendering="crispEdges">
 <g fill="none" stroke="#555" stroke-width="1"><rect x="0.5" y="0.5" width="5" height="5"/><rect x="8.5" y="0.5" width="5" height="5"/><rect x="0.5" y="8.5" width="5" height="5"/></g>
 <g fill="#555"><rect x="2" y="2" width="2" height="2"/><rect x="10" y="2" width="2" height="2"/><rect x="2" y="10" width="2" height="2"/><rect x="7" y="7" width="2" height="2"/><rect x="9" y="9" width="2" height="2"/><rect x="11" y="11" width="2" height="2"/><rect x="11" y="7" width="2" height="2"/><rect x="7" y="11" width="2" height="2"/></g>
</svg>
<div class="a" style="left:878px;top:12px;width:1px;height:21px;background:rgba(0,0,0,.12)"></div>
<svg class="a" style="left:888px;top:15px" width="50" height="16" viewBox="0 0 50 16">
 <g fill="#555"><circle cx="4.5" cy="7" r="2"/><circle cx="11" cy="7" r="2"/><circle cx="17.5" cy="7" r="2"/></g>
 <path d="M39 0.5L41.4 5.3L46.6 6L42.8 9.7L43.7 14.9L39 12.4L34.3 14.9L35.2 9.7L31.4 6L36.6 5.3Z" fill="none" stroke="#555" stroke-width="1.6" stroke-linejoin="round"/>
</svg>
<div id="search" class="a"></div>
<svg class="a" style="left:959px;top:13px" width="20" height="20" viewBox="0 0 20 20">
 <circle cx="8" cy="8" r="5.6" fill="none" stroke="#777" stroke-width="1.8"/><path d="M12 12L17 17" stroke="#777" stroke-width="2"/>
</svg>
<div class="a" style="left:983px;top:13px;font-size:14px;line-height:18px;color:#777">搜索</div>

<!-- bookmarks -->
<svg class="a" style="left:10px;top:43px" width="18" height="18" viewBox="0 0 18 18">
 <g stroke="#fff" stroke-width="2.6" stroke-linecap="butt"><path d="M8.8 1.8V15.8M1.8 8.8H15.8M3.85 3.85L13.75 13.75M13.75 3.85L3.85 13.75"/></g>
 <circle cx="8.8" cy="8.8" r="5.2" fill="#fff"/>
 <circle cx="8.8" cy="8.8" r="2.3" fill="#dcb48e"/>
</svg>
<div class="a bm" style="left:31px">最常访问</div>
<svg class="a" style="left:90px;top:44px" width="18" height="16" viewBox="0 0 18 16">
 <path d="M1.5 2.5H6.5L8 4H16.5V14.5H1.5Z M1.5 5.5H16.5" fill="rgba(255,240,225,.35)" stroke="#fff" stroke-width="1.3"/>
</svg>
<div class="a bm" style="left:111px">火狐官方站点</div>
<svg class="a" style="left:195px;top:43.5px" width="16" height="16" viewBox="0 0 16 16">
 <defs>
  <radialGradient id="ffo" cx=".4" cy=".55" r=".65"><stop offset="0" stop-color="#f9a623"/><stop offset=".65" stop-color="#ec6420"/><stop offset="1" stop-color="#cf3b1b"/></radialGradient>
  <linearGradient id="ffb" x1="0" y1="0" x2=".3" y2="1"><stop offset="0" stop-color="#5ec3f2"/><stop offset="1" stop-color="#183a8c"/></linearGradient>
 </defs>
 <circle cx="8" cy="8" r="7.9" fill="url(#ffo)"/>
 <path d="M3.8 2.2C6 0.4 11.5 0.6 13.6 4.3C14.6 7 13.6 10.4 11 11.5C9 12.3 7.2 11.6 6.6 10.6C8.6 10.8 10 9.5 9.6 8C9.2 7 7.6 7.5 6.9 6.5C7.6 5.6 8 4.6 7 3.9C6 3.5 4.6 3.6 3.8 2.2Z" fill="url(#ffb)"/>
 <path d="M12.6 3.3C15.2 6 15.2 10.2 13 12.6C14 10 13.8 6.4 12.6 3.3Z" fill="#ffd84a"/>
</svg>
<div class="a bm" style="left:215px">新手上路</div>
<svg class="a" style="left:274px;top:44px" width="18" height="16" viewBox="0 0 18 16">
 <path d="M1.5 2.5H6.5L8 4H16.5V14.5H1.5Z M1.5 5.5H16.5" fill="rgba(255,240,225,.35)" stroke="#fff" stroke-width="1.3"/>
</svg>
<div class="a bm" style="left:295px">常用网址</div>
<div class="a" style="left:355px;top:44px;width:16px;height:16px;background:#c8161d;color:#fff;font-size:11px;font-weight:bold;line-height:16px;text-align:center;letter-spacing:-0.5px">JD</div>
<div class="a bm" style="left:375px">京东商城</div>


</div>
</body></html>
